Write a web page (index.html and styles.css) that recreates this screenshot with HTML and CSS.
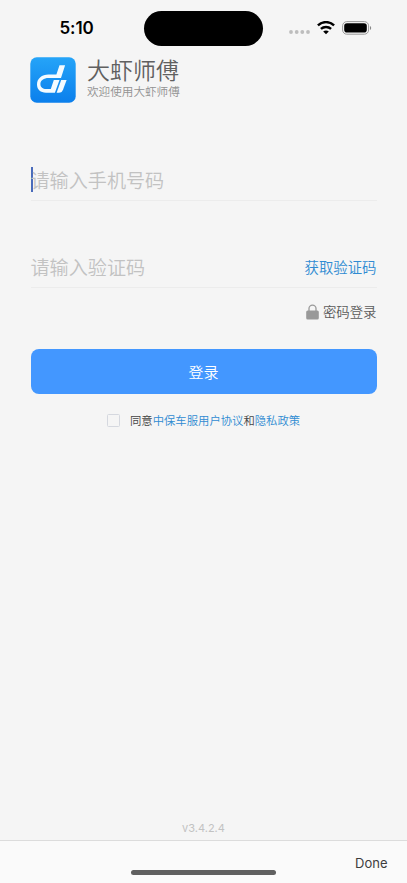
FILE: index.html
```html
<!DOCTYPE html>
<html lang="zh-CN">
<head>
<meta charset="utf-8">
<meta name="viewport" content="width=device-width, initial-scale=1">
<title>大虾师傅</title>
<link rel="stylesheet" href="styles.css">
</head>
<body>
<div class="screen">
  <div class="status">
    <div class="time">5:10</div>
    <div class="island"></div>
    <div class="indicators">
      <svg class="dots" width="21" height="4" viewBox="0 0 21 4"><circle cx="2" cy="2" r="1.9"/><circle cx="7.700" cy="2" r="1.9"/><circle cx="13.300" cy="2" r="1.9"/><circle cx="19" cy="2" r="1.9"/></svg>
      <svg class="wifi" width="18" height="14" viewBox="0 0 18 14"><path d="M.9 4.300C5.400 0 12.600 0 17.100 4.300M3.900 7.900c2.900-2.600 7.300-2.600 10.200 0" fill="none" stroke="#000" stroke-width="2.400"/><path d="M9 13.200 6.200 10.600c1.600-1.500 4-1.500 5.600 0z"/></svg>
      <svg class="battery" width="30" height="14" viewBox="0 0 30 14"><rect x=".6" y=".6" width="26" height="12.600" rx="4.200" fill="none" stroke="#999" stroke-width="1"/><rect x="2.200" y="2.200" width="22.600" height="9.400" rx="2.800"/><path d="M28 4.900c1.600.5 1.600 3.500 0 4z" fill="#888"/></svg>
    </div>
  </div>
  <header class="brand">
    <svg class="logo" width="46" height="46" viewBox="0 0 46 46">
      <defs><linearGradient id="bg" x1="0" y1="0" x2="0" y2="1"><stop offset="0" stop-color="#25a4f8"/><stop offset="1" stop-color="#0b7fec"/></linearGradient></defs>
      <rect x=".3" y=".3" width="45.400" height="45.400" rx="6.500" fill="url(#bg)"/>
      <path d="M29.500 8.300h5.600l-4.100 12.700H18.500c-4.600 0-8.100 2.400-8.100 5.900 0 3.200 2.500 5.100 5.700 5.100h4.700l3-9h5.700l-4.600 12.700h-8.900C10.500 35.700 7 32.500 7 27.500c0-6 5-9.900 11.400-9.900h8z" fill="#f4fbff"/>
      <path d="M31.200 23h5.400l-3.400 9.200c-.9 2.400-2 3.500-4.500 3.500h-2.100z" fill="#f4fbff"/>
    </svg>
    <div class="names">
      <h1>大虾师傅</h1>
      <p>欢迎使用大虾师傅</p>
    </div>
  </header>
  <main class="form">
    <div class="field phone"><span class="hint">请输入手机号码</span></div>
    <div class="field code"><span class="hint">请输入验证码</span><a class="send">获取验证码</a></div>
    <div class="switch">
      <svg width="13" height="16" viewBox="0 0 13 16"><path d="M3 8V4.600a3.500 3.500 0 0 1 7 0V8" fill="none" stroke="#999" stroke-width="1.300"/><rect x=".2" y="6.600" width="12.600" height="9" rx="1.500" fill="#999"/></svg>
      <span>密码登录</span>
    </div>
    <button class="login">登录</button>
    <div class="agree"><span class="box"></span><p>同意<a>中保车服用户协议</a>和<a>隐私政策</a></p></div>
  </main>
  <div class="version">v3.4.2.4</div>
  <footer class="toolbar"><span class="done">Done</span><i class="home"></i></footer>
</div>
</body>
</html>
```
FILE: styles.css
```css
* { box-sizing: border-box; margin: 0; padding: 0; }
body { background: #f5f5f5; font-family: Inter, "Noto Sans CJK SC", sans-serif; }
.screen { width: 407px; height: 883px; display: flex; flex-direction: column; overflow: hidden; }
.status { height: 57px; display: grid; grid-template-columns: 144px 119px 1fr; align-items: start; }
.time { padding: 18px 0 0 59.5px; font-size: 17px; line-height: 21px; font-weight: 600; letter-spacing: -0.1px; }
.island { margin-top: 11px; height: 35px; border-radius: 18px; background: #000; }
.indicators { display: flex; padding: 21px 0 0 26px; height: 35px; }
.dots { margin-top: 9px; fill: #bdbdbd; }
.wifi { margin-left: 7px; }
.battery { margin-left: 7px; }
.brand { display: flex; padding-left: 30px; height: 46px; }
.names { padding-left: 11px; }
h1 { font-size: 23px; line-height: 28px; font-weight: 350; color: #606060; }
.names p { font-size: 11.6px; line-height: 14px; font-weight: 350; color: #929292; }
.form { padding: 0 30.5px; flex: 1; }
.field { display: flex; align-items: center; justify-content: space-between; height: 42px; border-bottom: 1px solid #ececec; }
.phone { margin-top: 56px; }
.phone::before { content: ""; width: 2px; height: 25px; background: #4a6bbb; margin-right: -2px; }
.phone .hint { margin-right: auto; }
.code { margin-top: 45px; }
.hint { font-size: 19.1px; line-height: 28px; padding-top: 2px; font-weight: 350; color: #c2c2c2; }
.send { font-size: 14.4px; font-weight: 350; color: #2f8bd2; }
.switch { display: flex; justify-content: flex-end; align-items: center; gap: 3.5px; height: 20px; margin-top: 14px; font-size: 13.4px; line-height: 18px; padding-bottom: 1px; font-weight: 350; color: #5a5a5a; }
.login { display: block; width: 100%; height: 45px; margin-top: 27px; border: 0; border-radius: 8px; background: #4397ff; color: #fff; font: 350 15px/45px "Noto Sans CJK SC", sans-serif; }
.agree { display: flex; align-items: center; height: 20px; margin-top: 16px; padding-left: 76.5px; font-size: 11.35px; font-weight: 350; color: #444; }
.box { width: 13px; height: 13px; border: 1px solid #d5d8df; border-radius: 1.5px; margin-right: 10px; }
.agree a { color: #2f8bd2; }
.version { text-align: center; font-size: 11px; line-height: 14px; color: #c2c2c2; margin-bottom: 5px; }
.toolbar { height: 43px; border-top: 1px solid #dcdcdc; background: #fafafa; display: flex; flex-direction: column; align-items: center; }
.done { align-self: flex-end; padding: 14px 19.5px 0 0; font-size: 13px; line-height: 16px; color: #3d3d3d; }
.home { width: 145px; height: 4.5px; border-radius: 3px; background: #606060; margin-top: -1px; }
```
